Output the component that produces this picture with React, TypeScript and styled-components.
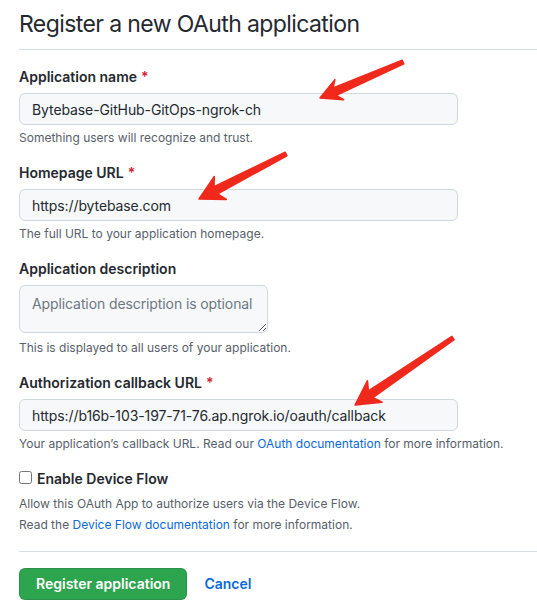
import React from "react";
import styled, { createGlobalStyle } from "styled-components";

const Global = createGlobalStyle`
  html, body { margin: 0; padding: 0; background: #ffffff; }
  body {
    font-family: Inter, "Noto Sans", "Liberation Sans", sans-serif;
    color: #24292f;
    -webkit-font-smoothing: antialiased;
  }
  * { box-sizing: border-box; }
`;

const Page = styled.div`
  position: relative;
  width: 537px;
  height: 611px;
  overflow: hidden;
  padding-left: 19px;
`;

const Header = styled.div`
  padding-top: 6px;
  padding-bottom: 7px;
  border-bottom: 1px solid #d8dee4;
`;

const Title = styled.h2`
  margin: 0;
  font-size: 23px;
  line-height: 36px;
  font-weight: 400;
  letter-spacing: -0.6px;
  color: #24292f;
`;

const Form = styled.form`
  display: flex;
  flex-direction: column;
  padding-top: 17px;
`;

const Group = styled.div`
  display: flex;
  flex-direction: column;
  & + & { margin-top: 16px; }
`;

const Label = styled.label`
  font-size: 14px;
  line-height: 20px;
  font-weight: 600;
  color: #24292f;
`;

const Req = styled.span`
  color: #cf222e;
  margin-left: 4px;
`;

const TextInput = styled.input`
  margin-top: 6px;
  width: 439px;
  height: 32px;
  padding: 5px 12px;
  font-family: inherit;
  font-size: 14px;
  line-height: 20px;
  letter-spacing: -0.1px;
  color: #24292f;
  background: #f6f8fa;
  border: 1px solid #d0d7de;
  border-radius: 6px;
  outline: none;
`;

const TextArea = styled.textarea`
  margin-top: 6px;
  margin-bottom: 2px;
  width: 249px;
  height: 48px;
  padding: 8px 4px 8px 12px;
  font-family: inherit;
  font-size: 14px;
  line-height: 20px;
  letter-spacing: -0.1px;
  white-space: pre;
  overflow: hidden;
  color: #24292f;
  background: #f6f8fa;
  border: 1px solid #d0d7de;
  border-radius: 6px;
  outline: none;
  &::placeholder { color: #6e7781; white-space: pre; }
`;

const Note = styled.p<{ $gap?: number }>`
  margin: ${(p) => p.$gap ?? 4}px 0 0;
  font-size: 12px;
  line-height: 18px;
  color: #57606a;
`;

const Link = styled.a`
  color: #0969da;
  text-decoration: none;
`;

const CheckRow = styled.label`
  display: flex;
  align-items: flex-start;
  font-size: 14px;
  line-height: 20px;
  font-weight: 600;
  color: #24292f;
`;

const Check = styled.input`
  width: 13px;
  height: 13px;
  margin: 2px 5px 0 0;
`;

const Rule = styled.hr`
  margin: 17px 0 0;
  border: 0;
  border-top: 1px solid #d8dee4;
  height: 0;
`;

const Actions = styled.div`
  display: flex;
  align-items: center;
  gap: 17px;
  margin-top: 16px;
`;

const Primary = styled.button`
  height: 32px;
  padding: 0 16px;
  font-family: inherit;
  font-size: 14px;
  line-height: 20px;
  font-weight: 600;
  color: #ffffff;
  background: #2da44e;
  border: 1px solid rgba(27, 31, 36, 0.15);
  border-radius: 6px;
`;

const CancelLink = styled.a`
  font-size: 14px;
  line-height: 20px;
  font-weight: 600;
  color: #0969da;
  text-decoration: none;
`;

const Overlay = styled.svg`
  position: absolute;
  left: 0;
  top: 0;
  pointer-events: none;
`;

type Arrow = { t: [number, number]; p: [number, number]; head: number; half: number };

const arrows: Arrow[] = [
  { t: [403, 62], p: [320, 98], head: 21, half: 11 },
  { t: [286, 154], p: [199, 199], head: 24, half: 13 },
  { t: [453, 338], p: [355, 405], head: 24, half: 13 },
];

function arrowPoints(a: Arrow): string {
  const [tx, ty] = a.t;
  const [px, py] = a.p;
  const dx = px - tx;
  const dy = py - ty;
  const len = Math.hypot(dx, dy);
  const ux = dx / len;
  const uy = dy / len;
  const nx = -uy;
  const ny = ux;
  const tailW = 2;
  const neckW = 4;
  const notch = 5;
  const nkx = px - ux * (a.head - notch);
  const nky = py - uy * (a.head - notch);
  const wx = px - ux * a.head;
  const wy = py - uy * a.head;
  const pts: [number, number][] = [
    [tx + nx * tailW, ty + ny * tailW],
    [nkx + nx * neckW, nky + ny * neckW],
    [wx + nx * a.half, wy + ny * a.half],
    [px, py],
    [wx - nx * a.half, wy - ny * a.half],
    [nkx - nx * neckW, nky - ny * neckW],
    [tx - nx * tailW, ty - ny * tailW],
  ];
  return pts.map(([x, y]) => `${x.toFixed(1)},${y.toFixed(1)}`).join(" ");
}

export default function App() {
  return (
    <>
      <Global />
      <Page>
        <Header>
          <Title>Register a new OAuth application</Title>
        </Header>
        <Form onSubmit={(e) => e.preventDefault()}>
          <Group>
            <Label>
              Application name<Req>*</Req>
            </Label>
            <TextInput defaultValue="Bytebase-GitHub-GitOps-ngrok-ch" />
            <Note>Something users will recognize and trust.</Note>
          </Group>
          <Group>
            <Label>
              Homepage URL<Req>*</Req>
            </Label>
            <TextInput defaultValue="https://bytebase.com" />
            <Note>The full URL to your application homepage.</Note>
          </Group>
          <Group>
            <Label>Application description</Label>
            <TextArea wrap="off" placeholder="Application description is optional" />
            <Note>This is displayed to all users of your application.</Note>
          </Group>
          <Group>
            <Label>
              Authorization callback URL<Req>*</Req>
            </Label>
            <TextInput defaultValue="https://b16b-103-197-71-76.ap.ngrok.io/oauth/callback" />
            <Note>
              Your application’s callback URL. Read our <Link href="#">OAuth documentation</Link> for more
              information.
            </Note>
          </Group>
          <Group>
            <CheckRow>
              <Check type="checkbox" />
              Enable Device Flow
            </CheckRow>
            <Note $gap={6}>Allow this OAuth App to authorize users via the Device Flow.</Note>
            <Note $gap={3}>
              Read the <Link href="#">Device Flow documentation</Link> for more information.
            </Note>
          </Group>
          <Rule />
          <Actions>
            <Primary type="submit">Register application</Primary>
            <CancelLink href="#">Cancel</CancelLink>
          </Actions>
        </Form>
        <Overlay width={537} height={611} viewBox="0 0 537 611">
          {arrows.map((a, i) => (
            <polygon
              key={i}
              points={arrowPoints(a)}
              fill="#f0291d"
              stroke="#f0291d"
              strokeWidth={1.5}
              strokeLinejoin="round"
            />
          ))}
        </Overlay>
      </Page>
    </>
  );
}
